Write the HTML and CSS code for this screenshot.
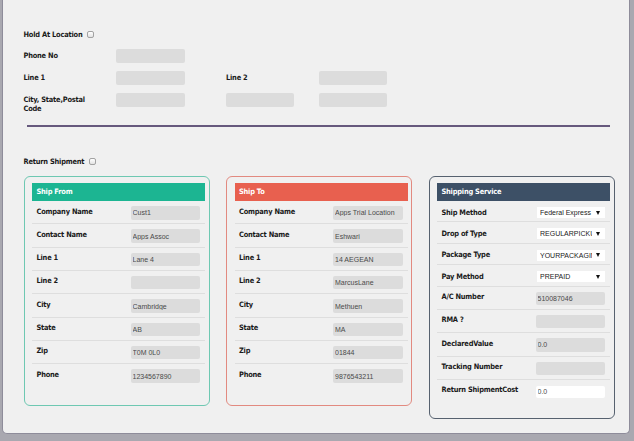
FILE: index.html
```html
<!DOCTYPE html>
<html>
<head>
<meta charset="utf-8">
<title>Shipment</title>
<link rel="stylesheet" href="styles.css">
</head>
<body>
<div class="panel">
  <div class="check-row"><span class="lbl">Hold At Location</span><input type="checkbox" class="cb"></div>
  <div class="addr-grid">
    <span class="lbl c1">Phone No</span><input class="fld c2" type="text">
    <span class="lbl c1">Line 1</span><input class="fld c2" type="text"><span class="lbl c4">Line 2</span><input class="fld c6" type="text">
    <span class="lbl c1">City, State,Postal<br>Code</span><input class="fld c2" type="text"><input class="fld c4" type="text"><input class="fld c6" type="text">
  </div>
  <hr class="divider">
  <div class="check-row return"><span class="lbl">Return Shipment</span><input type="checkbox" class="cb"></div>

  <div class="cards">
    <section class="card from">
      <h3 class="card-head">Ship From</h3>
      <div class="row"><span class="lbl">Company Name</span><input class="fld" value="Cust1"></div>
      <div class="row"><span class="lbl">Contact Name</span><input class="fld" value="Apps Assoc"></div>
      <div class="row"><span class="lbl">Line 1</span><input class="fld" value="Lane 4"></div>
      <div class="row"><span class="lbl">Line 2</span><input class="fld" value=""></div>
      <div class="row"><span class="lbl">City</span><input class="fld" value="Cambridge"></div>
      <div class="row"><span class="lbl">State</span><input class="fld" value="AB"></div>
      <div class="row"><span class="lbl">Zip</span><input class="fld" value="T0M 0L0"></div>
      <div class="row"><span class="lbl">Phone</span><input class="fld" value="1234567890"></div>
    </section>

    <section class="card to">
      <h3 class="card-head">Ship To</h3>
      <div class="row"><span class="lbl">Company Name</span><input class="fld" value="Apps Trial Location"></div>
      <div class="row"><span class="lbl">Contact Name</span><input class="fld" value="Eshwari"></div>
      <div class="row"><span class="lbl">Line 1</span><input class="fld" value="14 AEGEAN"></div>
      <div class="row"><span class="lbl">Line 2</span><input class="fld" value="MarcusLane"></div>
      <div class="row"><span class="lbl">City</span><input class="fld" value="Methuen"></div>
      <div class="row"><span class="lbl">State</span><input class="fld" value="MA"></div>
      <div class="row"><span class="lbl">Zip</span><input class="fld" value="01844"></div>
      <div class="row"><span class="lbl">Phone</span><input class="fld" value="9876543211"></div>
    </section>

    <section class="card service">
      <h3 class="card-head">Shipping Service</h3>
      <div class="row sel-row"><span class="lbl">Ship Method</span><span class="sel-wrap"><select class="sel"><option>Federal Express</option></select></span></div>
      <div class="row sel-row"><span class="lbl">Drop of Type</span><span class="sel-wrap"><select class="sel"><option>REGULARPICKUP</option></select></span></div>
      <div class="row sel-row"><span class="lbl">Package Type</span><span class="sel-wrap"><select class="sel"><option>YOURPACKAGING</option></select></span></div>
      <div class="row sel-row"><span class="lbl">Pay Method</span><span class="sel-wrap"><select class="sel"><option>PREPAID</option></select></span></div>
      <div class="row"><span class="lbl">A/C Number</span><input class="fld" value="510087046"></div>
      <div class="row"><span class="lbl">RMA ?</span><input class="fld" value=""></div>
      <div class="row"><span class="lbl">DeclaredValue</span><input class="fld" value="0.0"></div>
      <div class="row"><span class="lbl">Tracking Number</span><input class="fld" value=""></div>
      <div class="row"><span class="lbl">Return ShipmentCost</span><input class="fld white" value="0.0"></div>
    </section>
  </div>
</div>
</body>
</html>
```

FILE: styles.css
```css
* { box-sizing: border-box; }
html, body { margin: 0; height: 100%; }
body {
  background: #a9a8b0;
  font-family: "DejaVu Sans Condensed", "Liberation Sans", sans-serif;
  overflow: hidden;
}
.panel {
  margin: 0 4px 0 2px;
  height: 434px;
  background: #f0f0f0;
  border: 1px solid #8e8c9a;
  border-top: none;
  border-radius: 0 0 5px 5px;
  padding: 29px 0 0 20.5px;
}
.lbl {
  font-weight: bold;
  font-size: 7.4px;
  letter-spacing: -0.2px;
  line-height: 9.5px;
  padding-top: 1.5px;
  color: #1a1a1a;
  white-space: nowrap;
}
.check-row {
  display: flex;
  align-items: center;
  gap: 5px;
  height: 10px;
}
.check-row .lbl { padding-top: 2px; }
.check-row.return { margin-top: 29px; }
.cb {
  appearance: none;
  -webkit-appearance: none;
  width: 7px;
  height: 7px;
  margin: 0;
  border: 1px solid #a2a2a2;
  border-radius: 2px;
  background: linear-gradient(#ffffff, #e2e2e2);
}
.addr-grid {
  display: grid;
  grid-template-columns: 92.5px 68.5px 41.5px 68px 25px 68px;
  grid-auto-rows: 14px;
  row-gap: 8px;
  margin-top: 10px;
}
.c1 { grid-column: 1; }
.c2 { grid-column: 2; }
.c4 { grid-column: 4 / span 2; }
.c6 { grid-column: 6; }
.addr-grid .c4.fld { grid-column: 4; }
.fld {
  border: none;
  outline: none;
  background: #dcdcdc;
  border-radius: 2px;
  height: 14px;
  margin: 0;
  padding: 0 2px;
  font-family: "Liberation Sans", Arial, sans-serif;
  font-size: 7px;
  color: #4a4a4a;
}
.divider {
  margin: 18px 19px 0 3px;
  border: 0;
  border-top: 2px solid #66597d;
  height: 0;
}
.cards {
  display: flex;
  align-items: flex-start;
  gap: 16.5px;
  margin-top: 10px;
}
.card {
  width: 186px;
  border: 1px solid;
  border-radius: 6px;
  padding: 6px 3.5px 17px 7.5px;
}
.card.from { border-color: #6ec8b2; }
.card.to { border-color: #e28a80; }
.card.service { border-color: #56616f; padding-bottom: 15px; }
.card-head {
  margin: 0;
  height: 18px;
  line-height: 18px;
  padding-left: 4.5px;
  font-size: 7.4px;
  letter-spacing: -0.2px;
  font-weight: bold;
  color: #ffffff;
}
.from .card-head { background: #1cb592; }
.to .card-head { background: #e8604f; }
.service .card-head { background: #3d5066; }
.row {
  display: flex;
  justify-content: space-between;
  align-items: flex-start;
  height: 23.33px;
  padding: 5px 5px 0 4.5px;
  border-bottom: 1px solid #dedede;
}
.row:last-child { border-bottom: none; }
.row .lbl { padding-top: 0.5px; }
.row .fld { width: 69.5px; height: 13.5px; }
.row .fld.white { background: #ffffff; height: 12px; margin-top: 1px; }
.sel-row { height: 21.4px; padding-top: 6px; }
.sel-wrap {
  position: relative;
  display: block;
  width: 68.5px;
  height: 11px;
  background: #ffffff;
}
.sel-wrap::after {
  content: "";
  position: absolute;
  right: 5px;
  top: 3.5px;
  border-left: 2.5px solid transparent;
  border-right: 2.5px solid transparent;
  border-top: 4px solid #111;
  pointer-events: none;
}
.sel {
  appearance: none;
  -webkit-appearance: none;
  display: block;
  width: 100%;
  height: 11px;
  border: none;
  outline: none;
  background: transparent;
  margin: 0;
  padding: 0 13px 0 3.5px;
  font-family: "Liberation Sans", Arial, sans-serif;
  font-size: 7px;
  line-height: 11px;
  color: #222;
}
```
